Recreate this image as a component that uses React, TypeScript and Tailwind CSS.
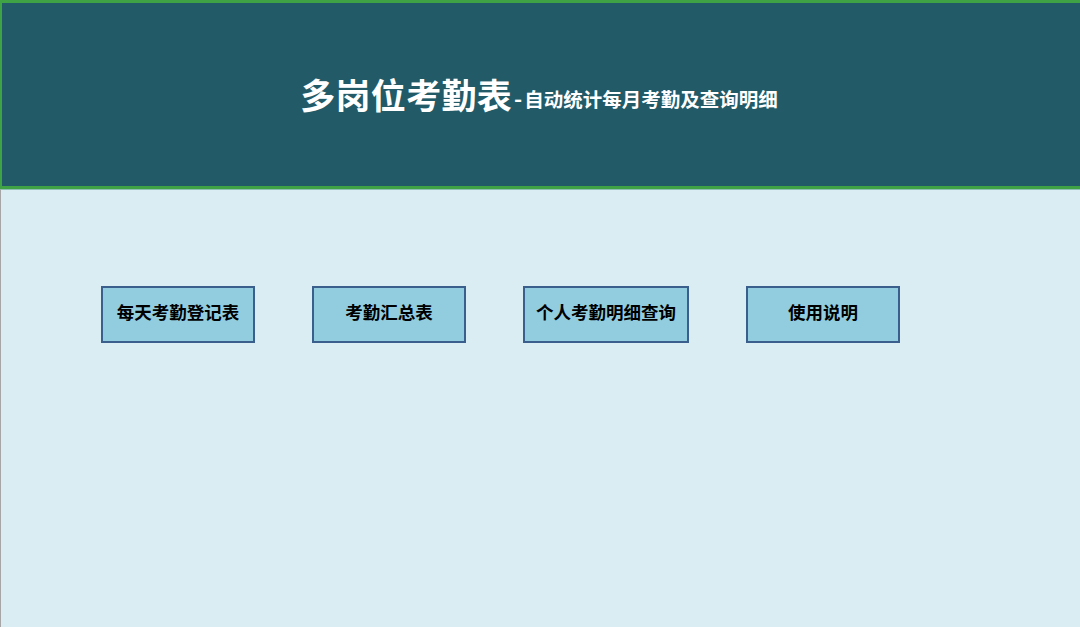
const font = { fontFamily: '"Noto Sans CJK SC", "Liberation Sans", sans-serif' }

const buttons = [
  { label: '每天考勤登记表', w: 'w-[154px]' },
  { label: '考勤汇总表', w: 'w-[154px]' },
  { label: '个人考勤明细查询', w: 'w-[166px]' },
  { label: '使用说明', w: 'w-[154px]' },
]

export default function App() {
  return (
    <div className="w-[1080px] h-[630px] bg-white flex flex-col" style={font}>
      {/* 标题栏 */}
      <div className="h-[189px] bg-[#225a68] border-t-[3px] border-l-[2px] border-b-[3px] border-[#3fa244] flex items-center justify-center">
        <div className="flex items-end pb-[3px] pr-[4px] text-white font-bold">
          <span className="text-[35px] leading-none tracking-[0.3px]">多岗位考勤表</span>
          <span className="text-[22px] leading-none mb-[3px] mx-[2px]">-</span>
          <span className="text-[19.5px] leading-none mb-[2px]">自动统计每月考勤及查询明细</span>
        </div>
      </div>
      {/* 按钮区 */}
      <div className="h-[438px] bg-[#daedf3] border-l border-[#a6a6a6] border-t border-t-[#8fbfb5]">
        <div className="flex gap-[57px] pl-[100px] pt-[96px]">
          {buttons.map((b) => (
            <button
              key={b.label}
              className={`${b.w} h-[57px] bg-[#92cddf] border-2 border-[#3b5f8c] text-black font-bold text-[17.5px] pb-[4px] flex items-center justify-center`}
            >
              {b.label}
            </button>
          ))}
        </div>
      </div>
    </div>
  )
}
